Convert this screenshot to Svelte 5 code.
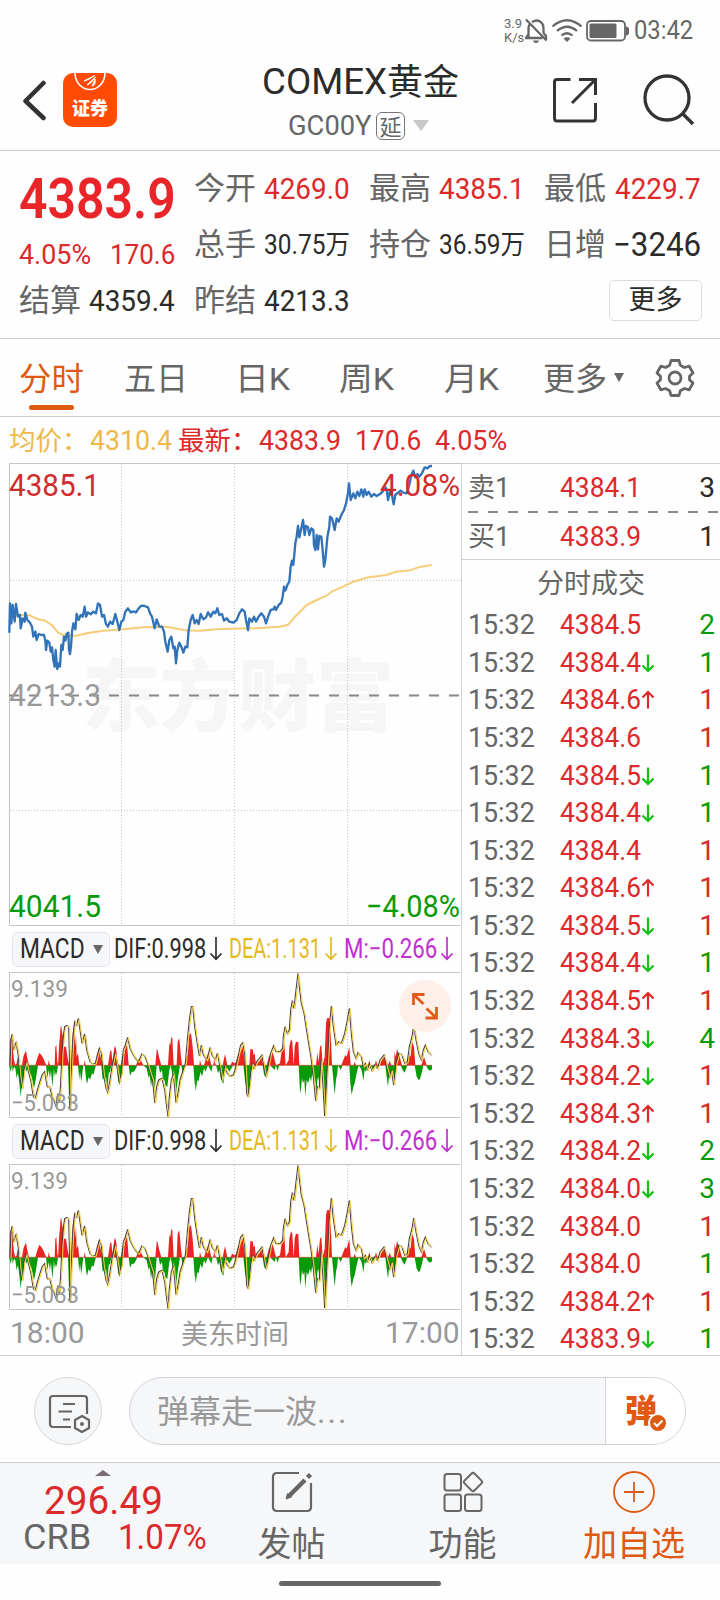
<script>
  function fit(node, width) {
    const inner = node.firstElementChild;
    inner.style.transform = `scaleX(${width / inner.offsetWidth})`;
  }

  const tabs = ['分时', '五日', '日K', '周K', '月K'];
  const tabWidths = [65, 64, 55, 55, 55];

  const trades = [
    ['4384.5', '', 2, 'g'], ['4384.4', 'd', 1, 'g'], ['4384.6', 'u', 1, 'r'], ['4384.6', '', 1, 'r'],
    ['4384.5', 'd', 1, 'g'], ['4384.4', 'd', 1, 'g'], ['4384.4', '', 1, 'r'], ['4384.6', 'u', 1, 'r'],
    ['4384.5', 'd', 1, 'r'], ['4384.4', 'd', 1, 'g'], ['4384.5', 'u', 1, 'r'], ['4384.3', 'd', 4, 'g'],
    ['4384.2', 'd', 1, 'r'], ['4384.3', 'u', 1, 'r'], ['4384.2', 'd', 2, 'g'], ['4384.0', 'd', 3, 'g'],
    ['4384.0', '', 1, 'r'], ['4384.0', '', 1, 'g'], ['4384.2', 'u', 1, 'r'], ['4383.9', 'd', 1, 'g']
  ];

  const price = '28,548 30,460 34,520 38,465 44,515 48,462 54,500 60,495 62,535 68,505 74,515 76,488 82,510 90,518 96,530 100,560 106,545 110,570 116,552 124,555 132,555 136,572 138,600 142,572 148,578 152,605 156,592 160,630 164,650 167,600 170,640 172,657 176,640 180,650 184,585 188,600 192,560 196,572 200,552 205,548 207,600 210,612 213,590 216,545 220,520 226,538 230,492 236,510 242,495 248,500 254,470 258,500 264,487 272,493 280,485 288,490 294,460 300,465 306,500 312,495 318,522 324,530 330,515 338,522 346,492 352,515 358,540 364,515 370,510 376,485 384,475 392,487 400,484 408,487 416,475 424,467 434,468 444,472 450,490 456,500 464,535 470,508 478,530 486,530 492,545 496,575 503,605 508,570 514,560 520,595 524,590 528,640 532,600 538,578 544,590 550,608 556,590 562,592 566,540 572,510 578,495 584,520 590,510 596,522 602,492 610,508 618,502 624,487 632,500 640,485 646,490 652,475 658,495 666,492 672,512 680,505 688,515 700,518 710,510 718,490 726,478 734,485 738,510 744,540 748,505 756,515 762,500 768,515 776,500 784,490 792,500 798,520 806,495 812,480 820,478 824,470 828,480 836,465 844,458 848,440 852,410 856,422 862,405 868,395 872,350 876,332 880,345 886,280 890,260 894,228 898,262 904,235 909,210 914,255 918,228 924,232 928,255 934,235 940,240 942,285 946,300 950,255 954,298 958,258 964,260 968,300 972,350 976,330 982,262 988,230 990,200 996,205 1004,240 1010,205 1016,215 1024,195 1032,180 1038,160 1044,130 1047,100 1052,150 1060,130 1066,145 1072,125 1078,138 1084,118 1090,140 1094,118 1100,135 1106,125 1114,140 1122,132 1130,138 1140,132 1148,125 1154,108 1160,118 1164,150 1170,125 1176,135 1181,163 1186,135 1194,128 1202,122 1210,128 1220,130 1228,105 1234,75 1240,62 1246,82 1252,72 1258,80 1266,70 1274,52 1282,55 1290,48 1296,48';
  const average = '28,500 62,494 90,496 110,506 135,512 155,525 175,548 190,555 225,558 260,550 310,542 370,538 430,532 500,530 555,541 600,542 650,538 690,536 770,535 840,530 865,524 890,495 920,465 950,450 980,437 995,425 1040,405 1060,395 1105,382 1160,375 1185,366 1230,361 1255,352 1295,345';

  const dif = '30,556 33,480 36,462 40,510 48,488 54,520 60,590 66,625 72,570 78,545 84,570 92,600 100,650 106,655 112,630 118,610 126,585 134,575 138,600 142,620 150,622 156,650 162,660 168,680 174,640 178,665 182,610 186,520 190,470 194,440 200,436 206,440 208,520 210,690 213,600 218,480 224,425 230,435 235,415 240,450 246,490 254,462 260,510 270,545 278,552 286,550 292,525 298,505 304,520 310,580 318,625 323,637 330,600 336,560 344,520 350,555 358,605 364,580 370,510 376,495 383,472 390,505 400,525 410,540 416,545 425,522 434,528 442,548 450,575 458,600 464,668 470,620 476,600 486,595 494,630 500,680 504,710 508,650 514,600 520,580 528,668 534,640 540,600 548,575 556,550 562,480 568,420 574,380 578,380 584,440 590,480 598,528 604,495 610,525 620,540 630,505 636,525 646,540 652,520 660,560 666,600 674,560 682,580 690,588 700,585 705,570 714,530 722,495 728,488 734,520 740,640 744,650 750,600 756,550 762,565 770,545 786,525 794,575 798,588 804,560 812,520 821,497 828,515 840,515 848,505 850,470 855,440 862,460 868,450 872,390 877,362 882,385 888,330 894,280 898,320 904,370 912,400 918,440 926,490 934,540 940,590 947,662 952,620 958,625 963,540 968,600 974,708 978,640 982,560 988,440 994,378 1000,440 1008,495 1016,485 1024,490 1034,460 1042,420 1048,385 1054,460 1060,515 1068,535 1074,518 1084,530 1090,560 1096,550 1102,568 1108,552 1116,572 1124,555 1132,565 1140,540 1152,525 1160,560 1168,590 1174,570 1181,615 1188,550 1196,520 1206,525 1214,550 1222,545 1228,500 1236,470 1241,438 1248,480 1256,520 1264,540 1270,510 1276,495 1284,515 1294,525';
  const redBars = '28,556 30,480 34,470 38,500 42,540 46,556 50,550 52,530 56,556 66,556 70,530 74,520 78,512 84,545 88,556 106,556 112,535 118,518 124,525 130,535 136,550 140,556 144,556 146,540 150,556 164,556 166,500 169,495 172,545 174,556 177,500 182,440 184,438 188,470 190,450 192,500 198,500 204,540 208,556 214,556 218,460 222,430 226,500 228,460 230,530 234,520 238,556 252,556 254,540 257,556 286,556 296,505 304,540 310,556 324,556 330,515 334,510 337,545 340,525 344,498 348,505 352,540 356,556 362,556 368,520 372,525 378,490 382,500 386,556 408,556 414,540 420,535 430,556 466,556 470,510 472,508 478,535 484,556 504,556 508,490 511,495 514,470 517,475 521,556 530,556 533,485 538,475 542,520 546,556 555,556 560,530 564,520 566,465 573,460 578,500 582,556 598,556 600,540 604,556 612,556 620,530 626,522 634,556 640,556 642,540 648,556 668,556 675,522 682,556 692,556 696,545 706,550 715,525 722,515 728,500 736,556 748,556 751,508 758,508 761,525 764,520 768,556 772,540 776,548 784,530 790,556 800,556 808,525 812,530 818,515 824,540 828,556 840,550 846,505 853,490 857,556 866,540 868,500 873,478 877,485 881,556 884,500 888,485 895,487 898,556 948,556 952,520 956,545 960,500 964,495 968,556 974,530 978,430 981,415 988,414 990,470 992,450 996,556 1024,556 1032,535 1036,525 1040,530 1048,500 1052,556 1060,556 1064,546 1068,556 1104,556 1108,540 1112,556 1124,556 1128,540 1132,556 1140,550 1150,530 1158,540 1164,556 1169,542 1174,556 1182,556 1184,515 1187,530 1191,508 1196,520 1206,556 1220,556 1228,520 1232,530 1236,485 1242,500 1246,556 1264,556 1272,530 1280,556 1296,556';
  const greenBars = '28,556 32,575 36,556 38,575 42,560 46,565 50,595 54,580 58,610 62,650 66,610 68,620 74,556 78,575 84,565 88,590 92,580 96,595 102,625 107,600 114,556 138,556 142,595 146,570 150,595 153,570 157,622 162,565 164,590 168,575 170,585 174,556 204,556 206,620 208,690 212,660 216,556 234,556 238,600 240,575 244,607 250,556 254,556 258,595 261,612 266,590 270,600 276,580 280,585 288,556 304,556 308,600 311,595 315,605 318,590 322,635 326,580 330,575 334,556 350,556 354,600 358,615 364,590 370,556 386,556 390,587 396,575 402,575 408,565 412,556 430,556 440,565 446,595 449,585 453,620 456,600 460,630 465,625 470,556 476,556 480,580 486,570 489,600 493,600 497,618 502,620 508,570 512,556 518,590 522,570 527,650 533,600 540,556 544,556 548,583 554,556 580,556 583,600 587,632 592,600 595,605 602,575 606,590 612,565 616,575 624,556 634,575 638,556 648,556 654,580 658,570 662,595 670,612 675,575 682,565 688,575 700,556 730,556 736,610 740,620 746,652 752,580 758,556 788,556 793,590 796,580 799,592 804,570 810,556 824,570 828,556 832,572 838,556 896,556 899,620 902,640 906,595 909,610 913,600 916,650 920,600 924,610 930,590 933,605 937,580 942,610 945,590 948,660 952,600 955,590 959,625 964,556 966,556 970,630 974,700 978,650 982,580 986,556 996,556 1000,600 1004,645 1008,600 1012,580 1014,556 1022,570 1028,556 1048,556 1051,610 1055,645 1060,620 1064,610 1070,580 1076,556 1082,565 1086,575 1090,602 1094,570 1098,575 1102,556 1106,572 1110,556 1116,570 1124,556 1132,568 1136,556 1156,556 1160,590 1164,620 1168,580 1172,590 1176,570 1180,595 1184,600 1190,556 1202,556 1208,570 1214,578 1222,556 1244,556 1250,590 1256,600 1260,598 1266,575 1270,556 1278,556 1284,568 1290,572 1296,568 1296,556';
</script>

{#snippet t(text, w, cls = '')}
  <span class="fit {cls}" style="width:{w}px" use:fit={w}><span>{text}</span></span>
{/snippet}

{#snippet downArrow(color)}
  <svg class="ind-arrow" width="14" height="26" viewBox="0 0 14 26" fill="none" stroke={color} stroke-width="1.7">
    <path d="M7 1V23M1.5 17.5L7 23.2L12.5 17.5" />
  </svg>
{/snippet}

{#snippet macdPanel(expand)}
  <div class="ind-head">
    <div class="ind-btn">{@render t('MACD', 65)}<i class="tri"></i></div>
    {@render t('DIF:0.998', 92)}{@render downArrow('#333')}
    {@render t('DEA:1.131', 92, 'gold')}{@render downArrow('#e6b922')}
    {@render t('M:−0.266', 93, 'purple')}{@render downArrow('#c22fd0')}
  </div>
  <div class="macd">
    <svg width="461" height="146" viewBox="0 0 461 146">
      <g stroke="#c4c4c4" fill="none">
        <path d="M121.5 1V145M234.5 1V145M347.5 1V145" stroke-dasharray="1 2" />
        <path d="M460 .5H9.5V145.5H460" />
      </g>
      <g transform="translate(0 -92) scale(.33333)">
        <polygon points="28,556 {greenBars}" fill="#079b07" />
        <polygon points="28,556 {redBars}" fill="#ea2420" />
        <path d="M28 556H1296" stroke="#c14420" stroke-width="2" />
        <polyline points={dif} fill="none" stroke="#444" stroke-width="3.4" />
        <polyline points={dif} transform="translate(3 2)" fill="none" stroke="#f3cf4c" stroke-width="3.2" />
      </g>
      <text x="11" y="25" textLength="57" lengthAdjust="spacingAndGlyphs" class="scale">9.139</text>
      <text x="11" y="138.500" textLength="68" lengthAdjust="spacingAndGlyphs" class="scale">−5.083</text>
    </svg>
    {#if expand}
      <svg class="expand" width="52" height="52" viewBox="0 0 52 52" fill="none" stroke="#e35a1c" stroke-width="2.800">
        <circle cx="26" cy="26" r="26" fill="#feefe8" stroke="none" />
        <path d="M14.500 25V14.500H25.500M15 15L24.500 24M27.500 28.500L37 37.500M37.500 27V38H26.500" />
      </svg>
    {/if}
  </div>
{/snippet}

<main>
  <div class="status">
    <div class="speed"><span>3.9</span><span>K/s</span></div>
    <svg width="24" height="26" viewBox="0 0 24 26" fill="none" stroke="#666" stroke-width="2.300">
      <path d="M4.500 19.500V10.500C4.500 8.500 5 7.300 5.800 6.200M8 4.200C14 0 19.500 4.500 19.500 10.500V15M1 20H18.500M2 1.500L22.500 22.500M4.500 16L2 20M19.500 15L22 18V22" />
      <path d="M9 22.500H15Q14.500 25 12 25T9 22.500Z" fill="#666" stroke="none" />
    </svg>
    <svg class="wifi" width="32" height="26" viewBox="0 0 32 26" fill="none" stroke="#666" stroke-width="2.200">
      <path d="M1.500 8.500Q16 -4 30.500 8.500M6 13Q16 4.500 26 13M10.500 17.500Q16 13 21.500 17.500" />
      <path d="M12.500 20.500Q16 18 19.500 20.500L16 24Z" fill="#666" stroke="none" />
    </svg>
    <svg class="battery" width="44" height="22" viewBox="0 0 44 22">
      <rect x="1" y="1" width="38" height="19.500" rx="4" fill="none" stroke="#666" stroke-width="1.800" />
      <rect x="3.500" y="3.500" width="27" height="14.500" rx="1.500" fill="#666" />
      <path d="M40 6.500Q43 7 43 9V13Q43 15 40 15.500Z" fill="#666" />
    </svg>
    {@render t('03:42', 59, 'clock')}
  </div>

  <header>
    <svg class="back" width="24" height="42" viewBox="0 0 24 42" fill="none" stroke="#333" stroke-width="4.500" stroke-linecap="round" stroke-linejoin="round">
      <path d="M20.500 3L2.500 21L20.500 38" />
    </svg>
    <div class="logo">
      <svg width="54" height="22" viewBox="0 0 54 22" fill="none" stroke="#fff" stroke-width="1.600">
        <path d="M12 0A15 16.500 0 0 0 42 0" />
        <path d="M21 8L31.500 2.500Q26 7 21 8ZM24 12L32.500 4Q28 11 24 12ZM29 13L32 6Q33 12 29 13Z" fill="#fff" stroke-width="1" />
      </svg>
      <b>证券</b>
    </div>
    <div class="name">
      <div class="title">{@render t('COMEX', 125)}<span>黄金</span></div>
      <div class="code">{@render t('GC00Y', 84)}<span class="delay">延</span><i class="tri"></i></div>
    </div>
    <svg class="share" width="44" height="45" viewBox="0 0 44 45" fill="none" stroke="#333" stroke-width="3">
      <path d="M17.500 1.500H4Q1.500 1.500 1.500 4V40Q1.500 43 4 43H40Q42.500 43 42.500 40V25M26 1.500H42.500V17M42 2L19 25" />
    </svg>
    <svg width="52" height="52" viewBox="0 0 52 52" fill="none" stroke="#333" stroke-width="3.300">
      <circle cx="24" cy="24" r="22" /><path d="M39.500 39.500L50 50" />
    </svg>
  </header>

  <section class="quote">
    <div class="last">
      {@render t('4383.9', 157, 'big')}
      <div class="pair">{@render t('4.05%', 72)}{@render t('170.6', 65)}</div>
    </div>
    <div class="cell"><span>今开</span>{@render t('4269.0', 86, 'red')}</div>
    <div class="cell"><span>最高</span>{@render t('4385.1', 86, 'red')}</div>
    <div class="cell"><span>最低</span>{@render t('4229.7', 86, 'red')}</div>
    <div class="cell"><span>总手</span>{@render t('30.75万', 86, 'small')}</div>
    <div class="cell"><span>持仓</span>{@render t('36.59万', 86, 'small')}</div>
    <div class="cell"><span>日增</span>{@render t('−3246', 88, 'large')}</div>
    <div class="cell"><span>结算</span>{@render t('4359.4', 86)}</div>
    <div class="cell"><span>昨结</span>{@render t('4213.3', 86)}</div>
    <div class="more">更多</div>
  </section>

  <nav>
    {#each tabs as tab, i}
      <div class="tab" class:active={i === 0}>{@render t(tab, tabWidths[i])}</div>
    {/each}
    <div class="tab">{@render t('更多', 64)}<i class="tri"></i></div>
    <svg width="40" height="40" viewBox="0 0 40 40" fill="none" stroke="#666" stroke-width="2.800" stroke-linejoin="round">
      <path d="M16 2.500H24L25.300 7.200L29.500 9.500L34.200 8.200L38 15L34.500 18.300V21.700L38 25L34.200 31.800L29.500 30.500L25.300 32.800L24 37.500H16L14.700 32.800L10.500 30.500L5.800 31.800L2 25L5.500 21.700V18.300L2 15L5.800 8.200L10.500 9.500L14.700 7.200Z" />
      <circle cx="20" cy="20" r="6" />
    </svg>
  </nav>

  <div class="info">
    <span class="amber">均价：</span>{@render t('4310.4', 82, 'amber')}
    <span>最新：</span>{@render t('4383.9', 82)}{@render t('170.6', 66)}{@render t('4.05%', 72)}
  </div>

  <div class="body">
    <div class="charts">
      <svg width="461" height="463" viewBox="0 463 461 463">
        <text x="82" y="725" textLength="312" lengthAdjust="spacingAndGlyphs" class="mark">东方财富</text>
        <g stroke="#c4c4c4" fill="none">
          <path d="M121.500 464V925M234.500 464V925M347.500 464V925M10 580.500H461M10 810.500H461" stroke-dasharray="1 2" />
          <path d="M461 463.500H9.500V925.500H460" />
        </g>
        <path d="M9 695.500H461" stroke="#888" stroke-width="1.800" stroke-dasharray="10 10" />
        <g transform="translate(0 450) scale(.33333)" fill="none" stroke-linejoin="round">
          <polyline points={average} stroke="#f6cd78" stroke-width="6" />
          <polyline points={price} stroke="#3273b8" stroke-width="7" />
        </g>
        <g class="axis">
          <text x="9" y="496" textLength="91" lengthAdjust="spacingAndGlyphs" fill="#d22b2b">4385.1</text>
          <text x="380" y="496" textLength="80" lengthAdjust="spacingAndGlyphs" fill="#d22b2b">4.08%</text>
          <text x="9" y="706" textLength="92" lengthAdjust="spacingAndGlyphs" fill="#999">4213.3</text>
          <text x="9" y="917" textLength="92" lengthAdjust="spacingAndGlyphs" fill="#079b07">4041.5</text>
          <text x="366" y="917" textLength="94" lengthAdjust="spacingAndGlyphs" fill="#079b07">−4.08%</text>
        </g>
      </svg>
      {@render macdPanel(true)}
      {@render macdPanel(false)}
      <div class="times">{@render t('18:00', 75)}<span>美东时间</span>{@render t('17:00', 75)}</div>
    </div>

    <aside>
      <div class="row quote-row"><span class="side">卖1</span>{@render t('4384.1', 81, 'red')}<em>3</em></div>
      <svg class="dashes" width="252" height="2" viewBox="0 0 252 2"><path d="M0 1H252" stroke="#888" stroke-width="1.800" stroke-dasharray="10 10" /></svg>
      <div class="row quote-row"><span class="side">买1</span>{@render t('4383.9', 81, 'red')}<em>1</em></div>
      <h3>分时成交</h3>
      {#each trades as [p, dir, qty, c]}
        <div class="row">
          {@render t('15:32', 67, 'time')}
          <div class="deal">
            {@render t(p, 81, 'red')}
            {#if dir}
              <svg width="14" height="20" viewBox="0 0 14 20" fill="none" stroke={dir === 'd' ? '#12c312' : '#e02828'} stroke-width="2.200">
                <path d={dir === 'd' ? 'M7 1.500V18M1.500 12.500L7 18L12.500 12.500' : 'M7 18.500V2M1.500 7.500L7 2L12.500 7.500'} />
              </svg>
            {/if}
          </div>
          <em class={c}>{qty}</em>
        </div>
      {/each}
    </aside>
  </div>

  <div class="comment">
    <div class="round">
      <svg width="44" height="40" viewBox="0 0 44 40" fill="none" stroke="#666" stroke-width="2.200">
        <path d="M23 33H5Q2 33 2 30V5Q2 2 5 2H36Q39 2 39 5V20M15 10H27M10.500 17.500H24M15 25.500H22" />
        <path d="M34 22L41 26V34L34 38L27 34V26Z" stroke-linejoin="round" /><circle cx="34" cy="30" r="2" fill="#666" stroke="none" />
      </svg>
    </div>
    <div class="input">
      <span class="placeholder">弹幕走一波<span class="dots">...</span></span>
      <div class="dan">
        <b>弹</b>
        <svg width="20" height="20" viewBox="0 0 20 20"><circle cx="10" cy="10" r="9" fill="#de5911" stroke="#fff" stroke-width="2" /><path d="M6 10L9 13L14.500 7.500" fill="none" stroke="#fff" stroke-width="2" /></svg>
      </div>
    </div>
  </div>

  <footer>
    <div class="index">
      <i class="up"></i>
      {@render t('296.49', 119, 'idx')}
      <div class="crb">{@render t('CRB', 68)}{@render t('1.07%', 89, 'red')}</div>
    </div>
    <div class="action">
      <svg width="42" height="42" viewBox="0 0 42 42" fill="none" stroke="#666" stroke-width="2.200">
        <path d="M28 2H6Q2 2 2 6V36Q2 40 6 40H36Q40 40 40 36V12" />
        <path d="M18.500 24.500L34 9M36.500 6.500L39.500 3.500" stroke-width="4.500" /><path d="M15 28L16.500 22.500L20.500 26Z" fill="#666" stroke-width="1" />
      </svg>
      <span>发帖</span>
    </div>
    <div class="action">
      <svg width="42" height="42" viewBox="0 0 42 42" fill="none" stroke="#666" stroke-width="2">
        <rect x="2.500" y="3" width="16.500" height="16.500" rx="2.500" /><rect x="2.500" y="23.500" width="16.500" height="16.500" rx="2.500" /><rect x="23" y="23.500" width="16.500" height="16.500" rx="2.500" />
        <rect x="24" y="4" width="14" height="14" rx="2" transform="rotate(45 31 11)" />
      </svg>
      <span>功能</span>
    </div>
    <div class="action orange">
      <svg width="42" height="42" viewBox="0 0 42 42" fill="none" stroke="#de5911" stroke-width="1.800"><circle cx="21" cy="21" r="20" /><path d="M21 11V31M11 21H31" /></svg>
      <span>加自选</span>
    </div>
  </footer>
  <div class="home"></div>
</main>

<style>
  :global(body) { margin: 0; background: #fefefe; }
  main { width: 720px; height: 1600px; overflow: hidden; font-family: Roboto, 'Noto Sans CJK SC', sans-serif; color: #2b2b2b; background: #fefefe; }
  main, main * { box-sizing: border-box; }
  svg { display: block; flex: none; }
  .fit { display: inline-block; flex: none; white-space: nowrap; }
  .fit > span { display: inline-block; transform-origin: 0 50%; }
  .red { color: #dc292b; }
  .tri { width: 0; height: 0; border: 5px solid transparent; border-top: 9px solid #666; border-bottom: 0; }

  .status { height: 60px; padding: 2px 27px 0 0; display: flex; align-items: center; justify-content: flex-end; color: #666; }
  .speed { display: flex; flex-direction: column; font-size: 13px; line-height: 14px; width: 20px; }
  .wifi { margin: 0 3px 0 3px; }
  .battery { margin-right: 4px; }
  .clock { font-size: 25px; line-height: 30px; }

  header { height: 91px; padding: 0 23px; display: flex; align-items: flex-start; border-bottom: 1px solid #ccc; }
  .back { margin-top: 20px; }
  .logo { margin: 13px 0 0 16px; width: 54px; height: 54px; border-radius: 10px; background: #ff4b05; color: #fff; text-align: center; }
  .logo b { display: block; font: 900 18px/24px 'Noto Sans CJK SC', sans-serif; }
  .name { width: 200px; margin: 0 91px 0 145px; }
  .title { height: 43px; display: flex; align-items: center; font-size: 37px; }
  .title > span:last-child { font-size: 36px; margin: 0 0 5px; font-family: 'Noto Sans CJK SC'; }
  .code { height: 42px; padding: 3px 0 0 26px; display: flex; align-items: center; font-size: 27px; color: #666; }
  .delay { width: 29px; height: 28px; margin-left: 4px; border: 1.500px solid #777; border-radius: 6px; font: 22px/24px 'Noto Sans CJK SC', sans-serif; text-align: center; }
  .code .tri { margin-left: 8px; border-width: 11px 8px 0; border-top-color: #c8c8c8; }
  .share { margin: 18px 0 0; }
  .share + svg { margin: 14px 0 0 46px; }

  .quote { height: 188px; padding: 10px 17px 0 19px; border-bottom: 1px solid #ccc; display: grid; grid-template: repeat(3, 56px) / 156px 156px 156px 157px; column-gap: 19px; align-content: start; }
  .last { grid-row: span 2; color: #dc292b; }
  .big { font-size: 55px; line-height: 70px; font-weight: 600; color: #ea2529; padding-top: 3px; }
  .pair { display: flex; justify-content: space-between; font-size: 28px; line-height: 42px; }
  .cell { display: flex; align-items: center; justify-content: space-between; font-size: 29.500px; line-height: 40px; }
  .cell > span:first-child { font-size: 31px; color: #666; }
  .small { font-size: 27px; }
  .large { font-size: 33px; }
  .more { grid-column: 4; width: 93px; height: 41px; margin: 7px 0 0 65px; border: 1.500px solid #ddd; border-radius: 5px; text-align: center; font-size: 27px; line-height: 38px; }

  nav { height: 78px; padding-left: 19px; border-bottom: 1px solid #ccc; display: grid; grid-template-columns: 105px 111px 104px 105px 99px 112px 40px; align-items: center; color: #666; font-size: 32px; }
  .tab { height: 77px; padding-top: 3px; line-height: 73px; display: flex; align-items: center; position: relative; }
  .tab .tri { margin: -3px 0 0 7px; border-width: 9px 5px 0; }
  .active { color: #de5911; }
  .active::after { content: ''; position: absolute; left: 10px; bottom: 6px; width: 45px; height: 5px; border-radius: 3px; background: #de5911; }

  .info { height: 46px; padding: 0 0 0 10px; display: grid; grid-template-columns: 80px 89px 80px 96px 80px 90px; align-items: center; font-size: 28px; color: #dc292b; white-space: nowrap; }
  .info > span:not(.fit) { font-size: 26.500px; margin: -3px 0 0 -1px; }
  .info > .amber { color: #eeb94b; }

  .body { height: 893px; display: grid; grid-template: 892px / 461px 259px; border-bottom: 1px solid #ccc; }
  .axis text { font: 31px Roboto; }
  .mark { font: 900 78px 'Noto Sans CJK SC'; fill: #f6f6f6; }
  .ind-head { height: 46px; padding-left: 12px; display: flex; align-items: center; font-size: 27px; }
  .ind-btn { width: 98px; height: 35px; margin-right: 4px; padding-left: 7px; display: flex; align-items: center; background: #f6f7fa; border: 1.500px solid #e6e7ea; border-radius: 6px; }
  .ind-btn .tri { margin-left: 8px; }
  .ind-arrow { margin: 0 6px 0 3px; }
  .gold { color: #e6b922; }
  .purple { color: #c22fd0; }
  .macd { position: relative; height: 146px; }
  .scale { font: 24px Roboto; fill: #999; }
  .expand { position: absolute; left: 399px; top: 8px; }
  .times { height: 45px; padding: 0 1px 0 10px; display: flex; align-items: center; justify-content: space-between; font-size: 30px; color: #999; }
  .times > span:nth-child(2) { font-size: 27px; }

  aside { height: 892px; overflow: hidden; border: 1px solid #ccd3d6; border-width: 1px 0 0 1px; padding-left: 6px; }
  .row { height: 37.580px; padding-right: 5px; display: grid; grid-template-columns: 92px 1fr auto; align-items: center; font-size: 28px; line-height: 36px; }
  .quote-row { height: 47px; }
  .side { color: #666; font-size: 27px; }
  .time { color: #666; }
  .deal { display: flex; align-items: center; }
  em { font-style: normal; }
  .g { color: #079b07; }
  .r { color: #dc292b; }
  h3 { margin: 0 0 0 -6px; height: 47.500px; border-top: 1px solid #ccd3d6; font-weight: 400; font-size: 27px; line-height: 48px; text-align: center; color: #666; }
  .quote-row + h3 { margin-top: -1px; }

  .comment { height: 106px; padding: 21px 34px; display: flex; justify-content: space-between; }
  .round { width: 68px; height: 68px; border: 1px solid #d6d7d9; border-radius: 50%; background: #f6f7f9; padding: 16px 0 0 13px; }
  .input { width: 557px; height: 68px; border: 1px solid #d0d2d8; border-radius: 34px; overflow: hidden; display: flex; background: #f6f7f9; }
  .placeholder { width: 475px; padding-left: 27px; font-size: 32px; line-height: 68px; color: #999; }
  .dots { letter-spacing: 2px; }
  .dan { position: relative; flex: 1; border-left: 1px solid #d0d2d8; background: #fff; color: #de5911; padding: 11px 0 0 19px; }
  .dan b { display: block; font: 900 32px/38px 'Noto Sans CJK SC', sans-serif; }
  .dan svg { position: absolute; left: 42px; top: 35px; }

  footer { height: 102px; border-top: 1px solid #ccd0d6; background: #f6f7f9; display: grid; grid-template-columns: 206px 171px 171px 172px; }
  .index { display: flex; flex-direction: column; align-items: center; color: #dc292b; padding-top: 7px; }
  .up { border: 8px solid transparent; border-width: 0 8px 6px; border-bottom-color: #7a6c76; }
  .idx { font-size: 39px; line-height: 42px; padding-top: 4px; height: 45px; }
  .crb { width: 206px; padding-left: 23px; display: flex; gap: 27px; font-size: 35px; line-height: 34px; }
  .crb > :global(span:first-child) { color: #666; }
  .action { display: flex; flex-direction: column; align-items: center; padding-top: 8px; font-size: 34px; line-height: 63px; color: #666; }
  .orange { color: #de5911; }
  .home { width: 162px; height: 5px; margin: 17px auto 0; border-radius: 3px; background: #666; }
</style>
